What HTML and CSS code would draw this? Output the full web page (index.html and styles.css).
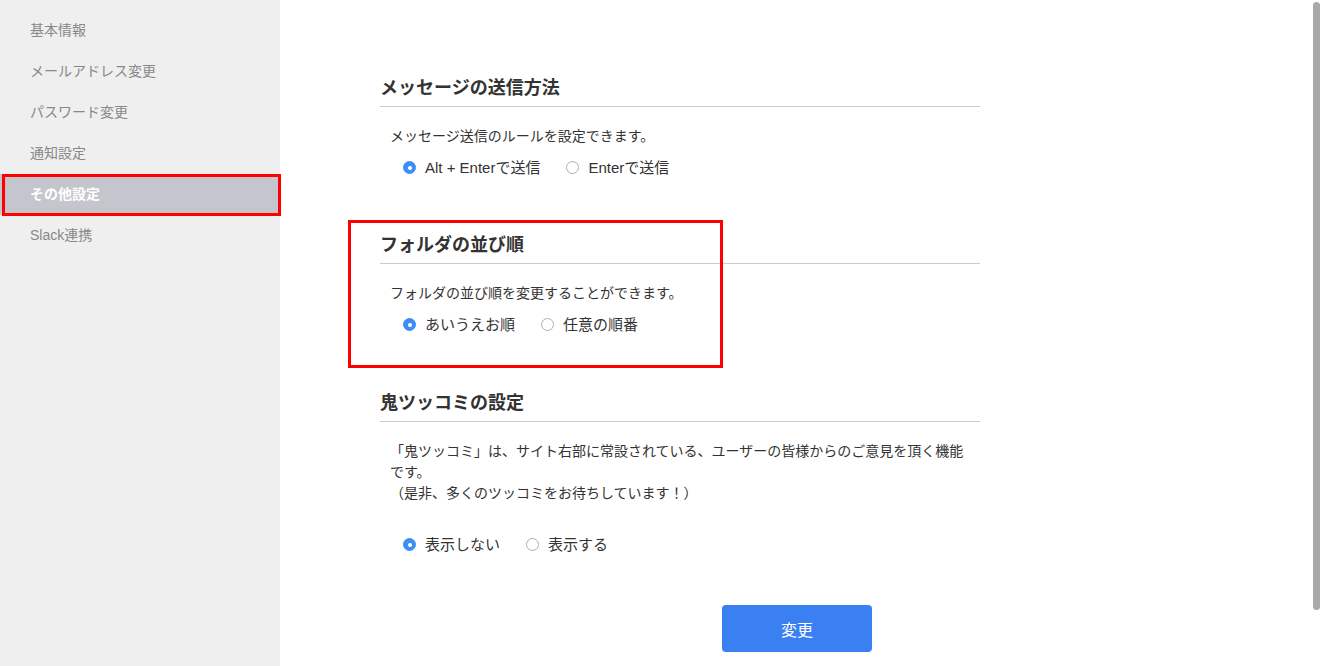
FILE: index.html
```html
<!DOCTYPE html>
<html lang="ja">
<head>
<meta charset="utf-8">
<title>その他設定</title>
<link rel="stylesheet" href="styles.css">
</head>
<body>
<div class="layout">
  <nav class="sidebar">
    <a class="nav-item">基本情報</a>
    <a class="nav-item">メールアドレス変更</a>
    <a class="nav-item">パスワード変更</a>
    <a class="nav-item">通知設定</a>
    <a class="nav-item is-active">その他設定</a>
    <a class="nav-item">Slack連携</a>
  </nav>
  <main class="main">
    <section class="section">
      <h2 class="section-title">メッセージの送信方法</h2>
      <p class="section-desc">メッセージ送信のルールを設定できます。</p>
      <div class="radios">
        <label class="radio"><span class="radio-dot is-checked"></span>Alt + Enterで送信</label>
        <label class="radio"><span class="radio-dot"></span>Enterで送信</label>
      </div>
    </section>
    <section class="section is-highlighted">
      <h2 class="section-title">フォルダの並び順</h2>
      <p class="section-desc">フォルダの並び順を変更することができます。</p>
      <div class="radios">
        <label class="radio"><span class="radio-dot is-checked"></span>あいうえお順</label>
        <label class="radio"><span class="radio-dot"></span>任意の順番</label>
      </div>
    </section>
    <section class="section section-last">
      <h2 class="section-title">鬼ツッコミの設定</h2>
      <p class="section-desc">「鬼ツッコミ」は、サイト右部に常設されている、ユーザーの皆様からのご意見を頂く機能です。<br>（是非、多くのツッコミをお待ちしています！）</p>
      <div class="radios radios-spaced">
        <label class="radio"><span class="radio-dot is-checked"></span>表示しない</label>
        <label class="radio"><span class="radio-dot"></span>表示する</label>
      </div>
    </section>
    <div class="actions">
      <button class="btn-primary" type="button">変更</button>
    </div>
  </main>
</div>
<div class="scrollbar-thumb"></div>
</body>
</html>
```

FILE: styles.css
```css
html, body {
  margin: 0;
  padding: 0;
  height: 100%;
  overflow: hidden;
}
body {
  font-family: "Liberation Sans", "Noto Sans CJK JP", sans-serif;
  color: #333;
  background: #fff;
}
.layout {
  display: flex;
  min-height: 100vh;
}
.sidebar {
  width: 280px;
  flex: 0 0 280px;
  background: #efefef;
  padding-top: 10px;
  display: flex;
  flex-direction: column;
  position: relative;
  z-index: 1;
}
.nav-item {
  display: block;
  height: 41px;
  line-height: 41px;
  padding-left: 30px;
  font-size: 14px;
  color: #888;
  text-decoration: none;
}
.nav-item.is-active {
  background: #c5c6cd;
  color: #fff;
  font-weight: bold;
  position: relative;
}
.nav-item.is-active::after {
  content: "";
  position: absolute;
  left: 2px;
  right: -1px;
  top: 0;
  bottom: -1px;
  border: 3px solid #ff0000;
}
.main {
  flex: 1;
  padding: 75px 0 0 100px;
}
.section {
  width: 600px;
  position: relative;
}
.section + .section {
  margin-top: 54px;
}
.section + .section-last {
  margin-top: 55px;
}
.section.is-highlighted::after {
  content: "";
  position: absolute;
  left: -32px;
  top: -12px;
  width: 375px;
  height: 148px;
  box-sizing: border-box;
  border: 3px solid #ff0000;
}
.section-title {
  margin: 0;
  font-size: 18px;
  line-height: 26px;
  font-weight: bold;
  color: #333;
  padding-bottom: 5px;
  border-bottom: 1px solid #cccccc;
}
.section-desc {
  margin: 19px 0 0;
  padding: 0 10px;
  font-size: 14px;
  line-height: 21px;
  color: #333;
}
.radios {
  display: flex;
  align-items: center;
  gap: 24px;
  margin-top: 10px;
  padding-left: 23px;
  font-size: 15px;
  line-height: 21px;
  color: #333;
}
.radios-spaced {
  margin-top: 30px;
}
.radio {
  display: inline-flex;
  align-items: center;
  gap: 9px;
}
.radio + .radio {
  margin-left: 2px;
}
.radio-dot {
  flex: 0 0 13px;
  width: 13px;
  height: 13px;
  box-sizing: border-box;
  border-radius: 50%;
  border: 1px solid #b0b0b0;
  background: #fff;
  position: relative;
}
.radio-dot.is-checked {
  border-color: #3d8ef5;
  background: #3d8ef5;
}
.radio-dot.is-checked::after {
  content: "";
  position: absolute;
  left: 50%;
  top: 50%;
  width: 4px;
  height: 4px;
  margin: -2px 0 0 -2px;
  border-radius: 50%;
  background: #fff;
}
.actions {
  margin-top: 50px;
  padding-left: 342px;
}
.btn-primary {
  display: block;
  width: 150px;
  height: 47px;
  border: none;
  border-radius: 4px;
  background: #3a80f2;
  color: #fff;
  font-family: "Liberation Sans", "Noto Sans CJK JP", sans-serif;
  font-size: 16px;
}
.scrollbar-thumb {
  position: fixed;
  right: 2px;
  top: 2px;
  width: 7px;
  height: 608px;
  border-radius: 4px;
  background: #a9a9a9;
}
```
